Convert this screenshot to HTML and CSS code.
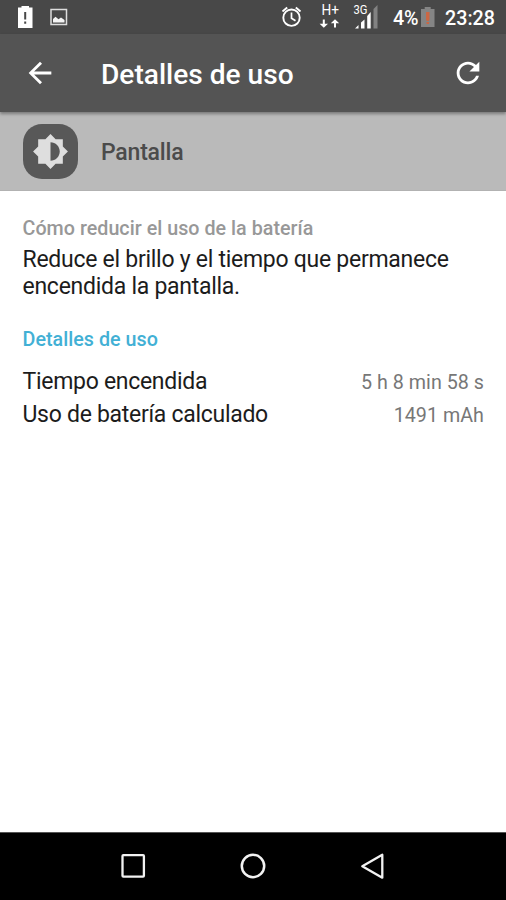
FILE: index.html
```html
<!DOCTYPE html>
<html lang="es">
<head>
<meta charset="utf-8">
<title>Detalles de uso</title>
<link rel="stylesheet" href="styles.css">
</head>
<body>
<div class="screen">
  <div class="status">
    <svg class="status-icons" width="80" height="34" viewBox="0 0 80 34">
      <path fill="#fff" d="M18 7.500h3.500V6h7.500v1.500h3.500V28H18z"/>
      <path stroke="#484848" stroke-width="2" d="M25.200 12v7.500M25.200 21.500v2.300"/>
      <rect x="51" y="9.500" width="15.500" height="15" fill="none" stroke="#ddd" stroke-width="1.500"/>
      <path fill="#f4f4f4" d="M53 22.500v-3.500l2.500-2.300 3 2.500 2.500-1.700 3.500 2.500v2.500z"/>
    </svg>
    <svg class="status-icons" width="110" height="34" viewBox="275 0 110 34">
      <g fill="none" stroke="#fff" stroke-width="1.900">
        <circle cx="291.500" cy="17.700" r="8.200"/>
        <path stroke-width="1.700" d="M291.500 12.500v5.700l4 2.500"/>
        <path d="M282.500 11.500l4.700-4M300.500 11.500l-4.700-4"/>
      </g>
      <text class="net-h" x="321.500" y="15.300" textLength="17.500" lengthAdjust="spacingAndGlyphs">H+</text>
      <path fill="#fff" d="M322.800 19.500h2v4.300h3.200l-4.200 4-4.200-4h3.200zM334 27.500h2v-4.300h3.200l-4.200-4-4.200 4h3.200z"/>
      <text class="net-g" x="353.500" y="14" textLength="14" lengthAdjust="spacingAndGlyphs">3G</text>
      <path fill="#fff" d="M355 28.500l3.500-3.500v3.500zM361 28.500v-6l3.500-3v9zM367.200 28.500V16l3.500-4v16.500z"/>
      <path fill="#828282" d="M373.500 28.500V9l4-4v23.500z"/>
    </svg>
    <span class="percent">4%</span>
    <svg class="battery" width="14" height="34" viewBox="0 0 14 34">
      <path fill="#858585" d="M0 9h3.700V7h6v2h3.800v18H0z"/>
      <path fill="#cb6744" d="M5 12h3.500v7.500L7.700 21H5.800L5 19.500zM5.500 22h2.600v2H5.500z"/>
    </svg>
    <span class="clock">23:28</span>
  </div>
  <header class="toolbar">
    <svg width="34" height="34" viewBox="0 0 24 24"><path fill="#fff" d="M20 11H7.830l5.590-5.590L12 4l-8 8 8 8 1.410-1.410L7.830 13H20z"/></svg>
    <h1>Detalles de uso</h1>
    <svg width="34" height="34" viewBox="0 0 24 24"><path fill="#fff" d="M17.650 6.350C16.200 4.900 14.210 4 12 4c-4.420 0-7.990 3.580-7.990 8s3.570 8 7.990 8c3.730 0 6.840-2.550 7.730-6h-2.080c-.820 2.330-3.040 4-5.650 4-3.310 0-6-2.690-6-6s2.690-6 6-6c1.660 0 3.140.690 4.220 1.780L13 11h7V4z"/></svg>
  </header>
  <section class="app">
    <div class="app-icon">
      <svg width="37" height="37" viewBox="0 0 24 24"><path fill="#dedede" fill-rule="evenodd" d="M20 15.310L23.310 12 20 8.690V4h-4.690L12 .690 8.690 4H4v4.690L.690 12 4 15.310V20h4.690L12 23.310 15.310 20H20zM12 18V6c3.310 0 6 2.690 6 6s-2.690 6-6 6z"/></svg>
    </div>
    <span class="app-name">Pantalla</span>
  </section>
  <main>
    <h2 class="tip-title">Cómo reducir el uso de la batería</h2>
    <p class="tip">Reduce el brillo y el tiempo que permanece encendida la pantalla.</p>
    <h2 class="details-title">Detalles de uso</h2>
    <div class="row"><span>Tiempo encendida</span><span class="value">5 h 8 min 58 s</span></div>
    <div class="row"><span>Uso de batería calculado</span><span class="value">1491 mAh</span></div>
  </main>
  <nav>
    <svg width="26" height="28" viewBox="0 0 26 28"><rect x="2.500" y="3.200" width="21.400" height="21.400" rx=".8" fill="none" stroke="#f2f2f2" stroke-width="2.300"/></svg>
    <svg width="26" height="28" viewBox="0 0 26 28"><circle cx="13" cy="14" r="11.200" fill="none" stroke="#f2f2f2" stroke-width="2.500"/></svg>
    <svg width="26" height="28" viewBox="0 0 26 28"><path d="M22.300 2.700v23L2.300 14.200z" fill="none" stroke="#f2f2f2" stroke-width="2.300" stroke-linejoin="round"/></svg>
  </nav>
</div>
</body>
</html>
```
FILE: styles.css
```css
* { box-sizing: border-box; margin: 0; padding: 0; }
body { font-family: Roboto, sans-serif; background: #fff; }
svg { display: block; flex: none; }
.screen { width: 506px; height: 900px; display: flex; flex-direction: column; overflow: hidden; }
.status {
  height: 34px; flex: none; display: flex; background: #484848; color: #fff;
  font-size: 19.700px; font-weight: 500; line-height: 37px; white-space: nowrap;
}
.status-icons:nth-child(2) { margin-left: 195px; }
.net-h { font-size: 14.500px; font-weight: 400; fill: #fff; }
.net-g { font-size: 12px; font-weight: 400; fill: #fff; }
.percent { width: 29px; margin-left: 8px; letter-spacing: -.3px; }
.battery { margin-left: -1px; }
.clock { margin-left: 10px; }
.toolbar {
  height: 78px; flex: none; display: flex; align-items: center; padding: 0 21px 0 23px;
  background: #545454; color: #fff; position: relative; box-shadow: 0 2px 3px rgba(0,0,0,.35);
}
h1 { flex: 1; margin-left: 44px; font-size: 28.100px; font-weight: 500; line-height: 34px; padding-top: 4px; }
.app { height: 79px; flex: none; display: flex; align-items: center; padding-left: 23px; background: #bababa; border-bottom: 1px solid #b2b2b2; }
.app-icon { width: 55px; height: 55px; border-radius: 19px; background: #585858; display: grid; place-items: center; }
.app-name { margin-left: 23px; font-size: 23px; letter-spacing: -.2px; font-weight: 500; color: #4b4b4b; line-height: 28px; padding-top: 4px; }
main { flex: 1; padding: 26px 22px 0 22.500px; color: #1c1c1c; }
h2 { font-size: 19.700px; font-weight: 500; line-height: 24px; letter-spacing: .03px; }
.tip-title { color: #989898; }
.tip { font-size: 23px; letter-spacing: -.27px; line-height: 26.700px; margin-top: 6px; }
.details-title { color: #42b0d5; margin: 28px 0 13px; }
.row { display: flex; justify-content: space-between; align-items: baseline; height: 33px; font-size: 23px; letter-spacing: -.29px; line-height: 33px; }
.value { font-size: 19.700px; letter-spacing: .03px; color: #777; }
nav { height: 68px; flex: none; background: #000; border-top: 1px solid #555; display: flex; justify-content: center; align-items: center; gap: 94px; padding-bottom: 1px; }
```
